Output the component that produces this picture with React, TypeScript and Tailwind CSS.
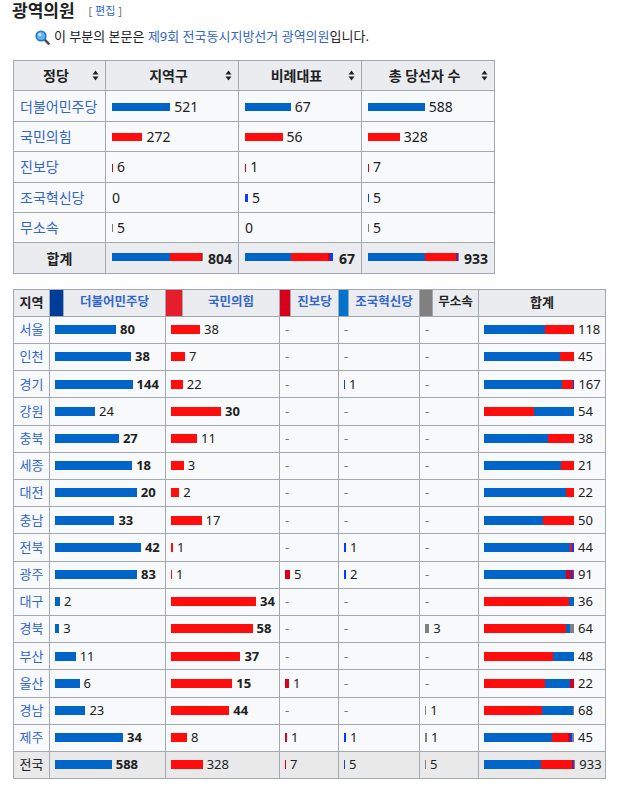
import clsx from 'clsx';

// party order: 더불어민주당, 국민의힘, 진보당, 조국혁신당, 무소속
const barColors = ['bg-[#0064c8]', 'bg-[#ff0d0d]', 'bg-[#d6001c]', 'bg-[#0a3cff]', 'bg-[#808080]'];
const stripColors = ['bg-[#003c9a]', 'bg-[#e61e2b]', 'bg-[#d6001c]', 'bg-[#0073cf]', 'bg-[#808080]'];
const stripWidths = ['w-[14px]', 'w-[17px]', 'w-[11px]', 'w-[10px]', 'w-[13px]'];
const nameWidths = ['w-[102px]', 'w-[97px]', 'w-[48px]', 'w-[71px]', 'w-[46px]'];
const partyNames = ['더불어민주당', '국민의힘', '진보당', '조국혁신당', '무소속'];

const summaryCols = [
  { total: 804, seats: [521, 272, 6, 0, 5], labels: ['521', '272', '6', '0', '5'], sum: '804' },
  { total: 67, seats: [34, 28, 1, 2.2, 0], labels: ['67', '56', '1', '5', '0'], sum: '67' },
  { total: 933, seats: [588, 328, 7, 5, 5], labels: ['588', '328', '7', '5', '5'], sum: '933' },
];

const regions: [string, number[]][] = [
  ['서울', [80, 38, 0, 0, 0]],
  ['인천', [38, 7, 0, 0, 0]],
  ['경기', [144, 22, 0, 1, 0]],
  ['강원', [24, 30, 0, 0, 0]],
  ['충북', [27, 11, 0, 0, 0]],
  ['세종', [18, 3, 0, 0, 0]],
  ['대전', [20, 2, 0, 0, 0]],
  ['충남', [33, 17, 0, 0, 0]],
  ['전북', [42, 1, 0, 1, 0]],
  ['광주', [83, 1, 5, 2, 0]],
  ['대구', [2, 34, 0, 0, 0]],
  ['경북', [3, 58, 0, 0, 3]],
  ['부산', [11, 37, 0, 0, 0]],
  ['울산', [6, 15, 1, 0, 0]],
  ['경남', [23, 44, 0, 0, 1]],
  ['제주', [34, 8, 1, 1, 1]],
];

const width = (v: number, total: number) => (v > 0 ? Math.max(1, (90 * v) / total) : 0);

function Bar({ segs, tall }: { segs: [number, number][]; tall?: boolean }) {
  const shown = segs.filter(([w]) => w > 0);
  if (!shown.length) return null;
  return (
    <span className={clsx('inline-flex align-middle mr-[4px] -mt-[2px]', tall ? 'h-[9px]' : 'h-[8px]')}>
      {shown.map(([w, p], i) => (
        <span key={i} className={clsx('h-full', barColors[p])} style={{ width: w }} />
      ))}
    </span>
  );
}

function SortIcon() {
  return (
    <svg width="7" height="11" viewBox="0 0 7 11" className="shrink-0">
      <path d="M3.5 0.5 L6.5 4.5 L0.5 4.5 Z" fill="#202122" />
      <path d="M3.5 10.5 L6.5 6.5 L0.5 6.5 Z" fill="#202122" />
    </svg>
  );
}

function Magnifier() {
  return (
    <svg width="15" height="15" viewBox="0 0 15 15">
      <path d="M9.6 9.6 L13.6 13.6" stroke="#4a4f55" strokeWidth="2.6" strokeLinecap="round" />
      <circle cx="6" cy="6" r="4.8" fill="#5fb3f0" stroke="#2a73c9" strokeWidth="1.6" />
      <circle cx="4.8" cy="4.6" r="1.6" fill="#c9e8ff" />
    </svg>
  );
}

const cell1 = 'border border-[#a2a9b1] px-[6px] h-[30.4px]';
const cell2 = 'border border-[#a2a9b1] px-[5px] h-[27.2px] whitespace-nowrap';

export default function App() {
  const natTotals = [588, 328, 7, 5, 5];

  return (
    <div className="min-h-screen bg-white text-[#202122] font-['Noto_Sans','Noto_Sans_CJK_KR',sans-serif] px-[12px]">
      <div className="flex items-center h-[20px] gap-[14px]">
        <h2 className="text-[17px] font-bold leading-none">광역의원</h2>
        <span className="text-[11px] text-[#72777d] leading-none">
          [ <span className="text-[#3366cc]">편집</span> ]
        </span>
      </div>

      <div className="flex items-center h-[20px] mt-[7px] pl-[23px] gap-[4px] text-[13px]">
        <Magnifier />
        <span>
          이 부분의 본문은 <span className="text-[#3366cc]">제9회 전국동시지방선거 광역의원</span>입니다.
        </span>
      </div>

      {/* party summary */}
      <table className="mt-[13px] ml-[1px] w-[481px] table-fixed border-collapse border border-[#a2a9b1] bg-[#f8f9fa] text-[14px]">
        <thead>
          <tr className="bg-[#eaecf0]">
            {[
              ['정당', 'w-[92px]'],
              ['지역구', 'w-[133px]'],
              ['비례대표', 'w-[123px]'],
              ['총 당선자 수', 'w-[133px]'],
            ].map(([label, w]) => (
              <th key={label} className={clsx(cell1, w, 'font-bold')}>
                <div className="flex items-center">
                  <span className="flex-1 text-center">{label}</span>
                  <SortIcon />
                </div>
              </th>
            ))}
          </tr>
        </thead>
        <tbody>
          {partyNames.map((name, p) => (
            <tr key={name}>
              <td className={clsx(cell1, 'text-[#3366cc]')}>{name}</td>
              {summaryCols.map((col, c) => (
                <td key={c} className={cell1}>
                  <Bar segs={[[width(col.seats[p], col.total), p]]} />
                  {col.labels[p]}
                </td>
              ))}
            </tr>
          ))}
          <tr className="bg-[#eaecf0] font-bold">
            <td className={clsx(cell1, 'text-center')}>합계</td>
            {summaryCols.map((col, c) => (
              <td key={c} className={cell1}>
                <div className="flex items-center">
                  <Bar segs={col.seats.map((v, p) => [width(v, col.total), p] as [number, number])} />
                  <span className="ml-auto">{col.sum}</span>
                </div>
              </td>
            ))}
          </tr>
        </tbody>
      </table>

      {/* by region */}
      <table className="mt-[15px] ml-[1px] w-[593px] table-fixed border-collapse border border-[#a2a9b1] bg-[#f8f9fa] text-[13px]">
        <thead>
          <tr className="bg-[#eaecf0] font-bold">
            <th className={clsx(cell2, 'w-[36px] text-center')}>지역</th>
            {partyNames.map((name, p) => (
              <>
                <th key={name + 's'} className={clsx('border border-[#a2a9b1]', stripColors[p], stripWidths[p])} />
                <th
                  key={name}
                  className={clsx(
                    cell2,
                    'text-center text-[12.5px]',
                    p < 4 ? 'text-[#3366cc]' : 'text-[#202122]',
                    nameWidths[p],
                  )}
                >
                  {name}
                </th>
              </>
            ))}
            <th className={clsx(cell2, 'w-[127px] text-center')}>합계</th>
          </tr>
        </thead>
        <tbody>
          {[...regions, ['전국', natTotals] as [string, number[]]].map(([name, seats]) => {
            const total = seats.reduce((a, b) => a + b, 0);
            const max = Math.max(...seats);
            const nat = name === '전국';
            const order = seats
              .map((v, p) => [v, p])
              .sort((a, b) => b[0] - a[0])
              .map(([v, p]) => [width(v, total), p] as [number, number]);
            return (
              <tr key={name} className={nat ? 'bg-[#e9e9e9]' : ''}>
                <td className={clsx(cell2, 'text-center', nat ? 'text-[#202122]' : 'text-[#3366cc]')}>{name}</td>
                {seats.map((v, p) => (
                  <td key={p} colSpan={2} className={cell2}>
                    {v > 0 ? (
                      <>
                        <Bar tall segs={[[width(v, total), p]]} />
                        <span className={v === max ? 'font-bold' : ''}>{v}</span>
                      </>
                    ) : (
                      <span className="text-[#72777d]">-</span>
                    )}
                  </td>
                ))}
                <td className={cell2}>
                  <Bar tall segs={order} />
                  {total}
                </td>
              </tr>
            );
          })}
        </tbody>
      </table>
    </div>
  );
}
